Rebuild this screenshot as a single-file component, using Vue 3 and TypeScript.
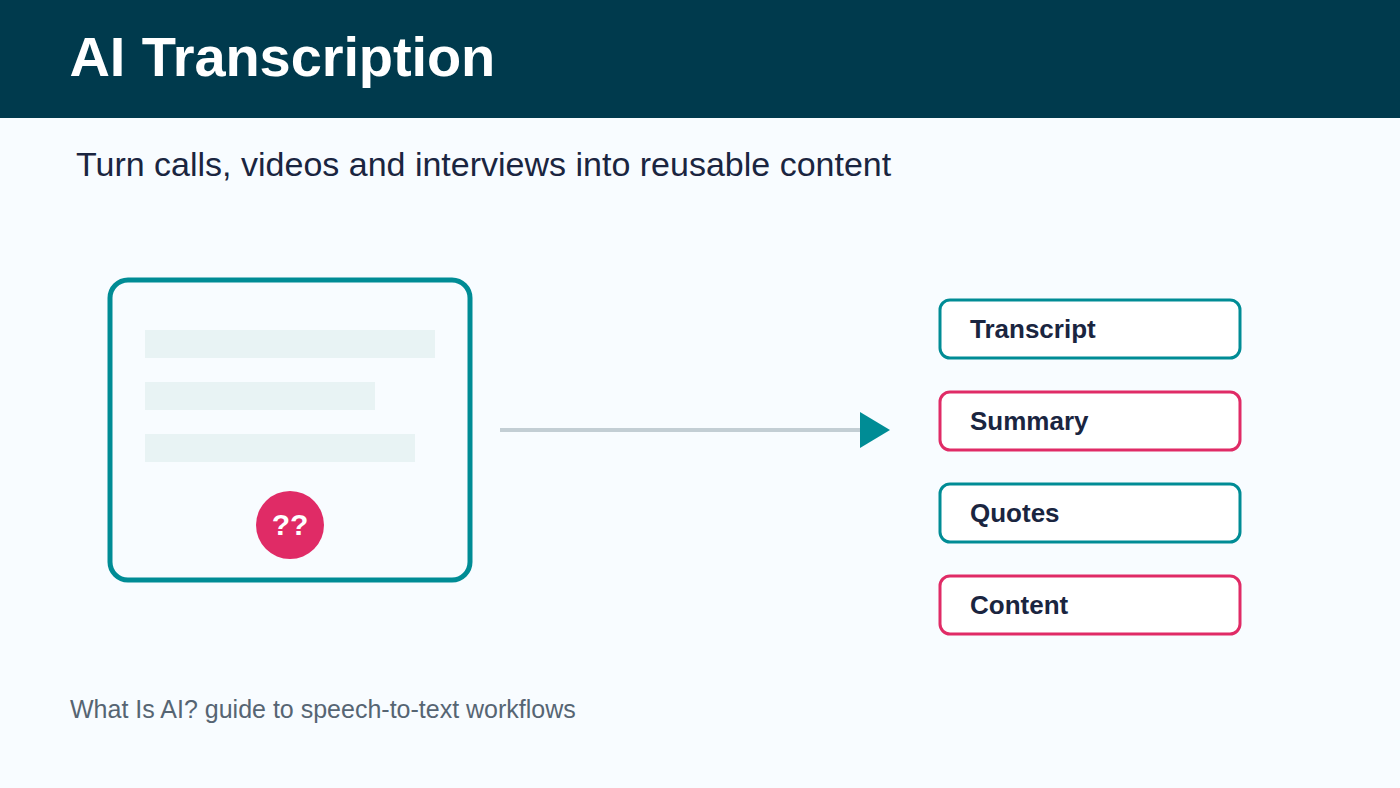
<script setup lang="ts">
const outputs = [
  { label: 'Transcript', tone: 'teal' },
  { label: 'Summary', tone: 'pink' },
  { label: 'Quotes', tone: 'teal' },
  { label: 'Content', tone: 'pink' },
]
</script>

<template>
  <div class="page">
    <header class="bar"><h1>AI Transcription</h1></header>
    <p class="sub">Turn calls, videos and interviews into reusable content</p>
    <main class="diagram">
      <div class="card">
        <svg class="frame" width="370" height="310" viewBox="0 0 370 310">
          <rect x="5" y="5" width="360" height="300" rx="18" fill="none" stroke="#008c95" stroke-width="5" />
        </svg>
        <div class="line l1"></div>
        <div class="line l2"></div>
        <div class="line l3"></div>
        <div class="badge">??</div>
      </div>
      <div class="arrow">
        <div class="shaft"></div>
        <svg class="head" width="30" height="36" viewBox="0 0 30 36"><polygon points="0,0 30,18 0,36" fill="#008c95" /></svg>
      </div>
      <ul class="outs">
        <li v-for="o in outputs" :key="o.label" :class="['out', o.tone]">
          <svg class="frame" width="306" height="64" viewBox="0 0 306 64">
            <rect x="3" y="3" width="300" height="58" rx="10" fill="#fff" stroke-width="3" />
          </svg>
          <span class="out-label">{{ o.label }}</span>
        </li>
      </ul>
    </main>
    <p class="foot">What Is AI? guide to speech-to-text workflows</p>
  </div>
</template>

<style>
html, body { margin: 0; background: #f8fcff; }
</style>

<style scoped>
.page { position: relative; width: 1400px; height: 788px; background: #f8fcff; font-family: "Liberation Sans", Arial, sans-serif; overflow: hidden; }
.bar { height: 118px; background: #003a4d; box-sizing: border-box; padding-left: 69.5px; display: flex; align-items: center; }
h1 { margin: 0; color: #fff; font-size: 56px; font-weight: 700; line-height: 1; word-spacing: 1px; letter-spacing: -0.1px; position: relative; top: -2px; }
.sub { margin: 26px 0 0 76px; font-size: 34px; line-height: 40px; color: #1a2540; }
.diagram { display: flex; margin: 91px 0 0 105px; align-items: flex-start; }
.frame { position: absolute; left: 0; top: 0; }
.card { position: relative; width: 370px; height: 310px; box-sizing: border-box; padding: 55px 0 0 40px; display: flex; flex-direction: column; }
.line { height: 28px; background: #e8f3f4; margin-bottom: 24px; }
.l1 { width: 290px; } .l2 { width: 230px; } .l3 { width: 270px; }
.badge { width: 68px; height: 68px; border-radius: 50%; background: #e02b66; color: #fff; font-weight: 700; font-size: 30px; display: flex; align-items: center; justify-content: center; margin: 5px 0 0 111px; }
.arrow { display: flex; align-items: center; margin: 137px 0 0 25px; }
.shaft { width: 360px; height: 4px; background: #c3ced4; }
.head { display: block; }
.outs { list-style: none; margin: 22px 0 0 47px; padding: 0; display: flex; flex-direction: column; gap: 28px; }
.out { position: relative; width: 306px; height: 64px; box-sizing: border-box; color: #1a2540; font-size: 26px; font-weight: 700; padding-left: 33px; display: flex; align-items: center; }
.out-label { position: relative; }
.teal .frame rect { stroke: #008c95; }
.pink .frame rect { stroke: #e02b66; }
.foot { margin: 0; position: absolute; left: 70px; top: 695px; font-size: 25px; line-height: 28px; color: #566573; }
</style>
